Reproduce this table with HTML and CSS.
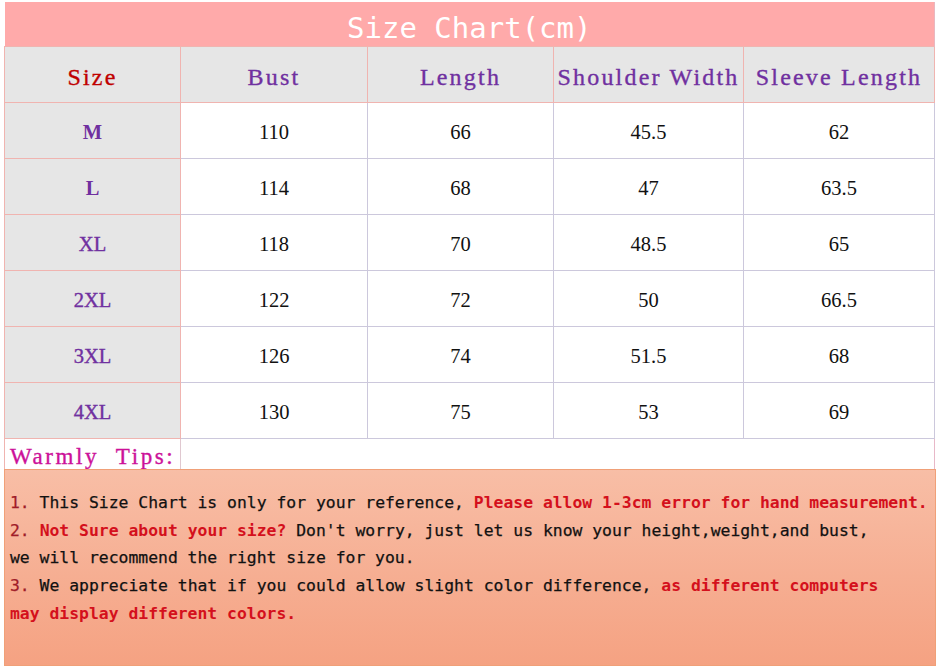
FILE: index.html
```html
<!DOCTYPE html>
<html>
<head>
<meta charset="utf-8">
<link rel="stylesheet" href="styles.css">
</head>
<body>
<div class="sheet">
  <table class="chart">
    <colgroup>
      <col class="c1"><col class="c2"><col class="c3"><col class="c4"><col class="c5">
    </colgroup>
    <tr class="title-row"><td colspan="5" class="title">Size Chart(cm)</td></tr>
    <tr class="head-row">
      <th class="h-size">Size</th>
      <th>Bust</th>
      <th>Length</th>
      <th>Shoulder Width</th>
      <th>Sleeve Length</th>
    </tr>
    <tr class="data-row"><td class="sz bold">M</td><td>110</td><td>66</td><td>45.5</td><td>62</td></tr>
    <tr class="data-row"><td class="sz bold">L</td><td>114</td><td>68</td><td>47</td><td>63.5</td></tr>
    <tr class="data-row"><td class="sz">XL</td><td>118</td><td>70</td><td>48.5</td><td>65</td></tr>
    <tr class="data-row"><td class="sz">2XL</td><td>122</td><td>72</td><td>50</td><td>66.5</td></tr>
    <tr class="data-row"><td class="sz">3XL</td><td>126</td><td>74</td><td>51.5</td><td>68</td></tr>
    <tr class="data-row"><td class="sz">4XL</td><td>130</td><td>75</td><td>53</td><td>69</td></tr>
    <tr class="tips-row"><td class="tips">Warmly&nbsp;&nbsp;Tips:</td><td colspan="4" class="tips-rest"></td></tr>
  </table>
  <div class="notes">
    <p><span class="num">1.</span> This Size Chart is only for your reference, <b class="red">Please allow 1-3cm error for hand measurement.</b></p>
    <p><span class="num">2.</span> <b class="red">Not Sure about your size?</b> Don't worry, just let us know your height,weight,and bust,</p>
    <p>we will recommend the right size for you.</p>
    <p><span class="num">3.</span> We appreciate that if you could allow slight color difference, <b class="red">as different computers</b></p>
    <p><b class="red">may display different colors.</b></p>
  </div>
</div>
</body>
</html>
```
FILE: styles.css
```css
html, body {
  margin: 0;
  padding: 0;
  background: #ffffff;
}
.sheet {
  width: 939px;
  height: 668px;
  padding: 2px 0 0 4px;
  box-sizing: border-box;
  overflow: hidden;
}
.chart {
  border-collapse: collapse;
  table-layout: fixed;
  width: 930px;
}
.c1 { width: 176px; }
.c2 { width: 187px; }
.c3 { width: 186px; }
.c4 { width: 190px; }
.c5 { width: 191px; }
.chart td, .chart th {
  padding: 0;
  text-align: center;
  vertical-align: middle;
  white-space: nowrap;
  overflow: hidden;
}
.title-row { height: 44px; }
.title {
  background: #ffaaaa;
  color: #ffffff;
  font-family: "DejaVu Sans Mono", monospace;
  font-size: 29px;
  line-height: 36px;
  padding-top: 8px !important;
  border-right: 1px solid #e8b8c0;
}
.head-row { height: 56px; }
.head-row th {
  background: #e6e6e6;
  border: 1px solid #f0b4b0;
  font-family: "Liberation Serif", serif;
  font-weight: normal;
  font-size: 24px;
  letter-spacing: 2.2px;
  line-height: 30px;
  padding-top: 5px;
  color: #7030a0;
  -webkit-text-stroke: 0.35px currentColor;
}
.head-row th.h-size { color: #c00000; }
.data-row { height: 56px; }
.data-row td {
  border: 1px solid #ccc8dc;
  background: #ffffff;
  font-family: "Liberation Serif", serif;
  font-size: 20.5px;
  line-height: 26px;
  padding-top: 3px;
  color: #111111;
}
.data-row td.sz {
  background: #e6e6e6;
  border: 1px solid #f0b4b0;
  color: #7030a0;
  font-size: 20.5px;
  -webkit-text-stroke: 0.4px currentColor;
}
.data-row td.bold { font-weight: bold; -webkit-text-stroke: 0; }
.tips-row { height: 30px; }
.tips {
  text-align: left !important;
  padding: 5px 0 0 5px !important;
  font-family: "Liberation Serif", serif;
  font-size: 23px;
  letter-spacing: 2.6px;
  line-height: 25px;
  color: #cc1199;
  border-left: 1px solid #f0b4b0;
  border-right: 1px solid #e0c8d0;
  -webkit-text-stroke: 0.35px currentColor;
}
.tips-rest {
  border-top: 1px solid #ccc8dc;
  border-right: 1px solid #e8b8c8;
}
.notes {
  width: 932px;
  height: 197px;
  box-sizing: border-box;
  background: linear-gradient(180deg, #f8bea6 0%, #f6ae92 55%, #f5a282 100%);
  border: 1px solid #f0a078;
  padding: 19px 0 0 5px;
  font-family: "DejaVu Sans Mono", monospace;
  font-size: 16.4px;
  color: #111111;
  -webkit-text-stroke: 0.25px currentColor;
}
.notes p {
  margin: 0;
  line-height: 27.7px;
  white-space: nowrap;
}
.num { color: #a01c28; }
.red { color: #d4101c; font-weight: bold; -webkit-text-stroke: 0; }
```
